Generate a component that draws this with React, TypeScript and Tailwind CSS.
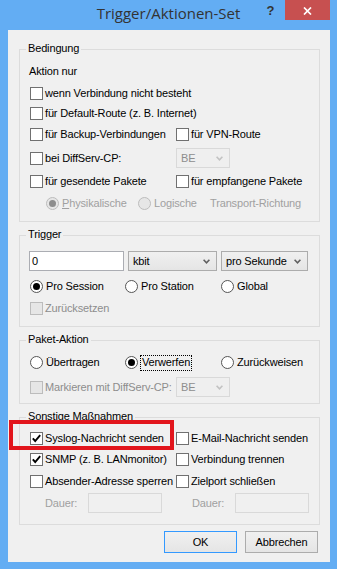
import type { ReactNode } from 'react'

function classNames(...classes: (string | boolean | undefined)[]): string {
  return classes.filter(Boolean).join(' ')
}

// checkbox square, 13px like the classic Win8 control
function Box({ checked, disabled }: { checked?: boolean; disabled?: boolean }) {
  return (
    <span
      className={classNames(
        'flex size-[13px] shrink-0 items-center justify-center border',
        disabled ? 'border-[#bcbcbc] bg-[#e6e6e6]' : 'border-[#707070] bg-white',
      )}
    >
      {checked && (
        <svg width="11" height="11" viewBox="0 0 11 11">
          <path d="M1.8 5.4 L4.2 8 L9.2 2.2" fill="none" stroke="#000" strokeWidth="1.9" />
        </svg>
      )}
    </span>
  )
}

function Check({ label, checked, disabled }: { label: ReactNode; checked?: boolean; disabled?: boolean }) {
  return (
    <div className="flex h-[13px] items-center gap-[2px] whitespace-nowrap">
      <Box checked={checked} disabled={disabled} />
      <span className={disabled ? 'text-[#8d8d8d]' : undefined}>{label}</span>
    </div>
  )
}

function Dot({ checked, disabled }: { checked?: boolean; disabled?: boolean }) {
  return (
    <span
      className={classNames(
        'flex size-[13px] shrink-0 items-center justify-center rounded-full border',
        disabled ? 'border-[#bcbcbc] bg-[#e6e6e6]' : 'border-[#555] bg-white',
      )}
    >
      {checked && <span className={classNames('size-[7px] rounded-full', disabled ? 'bg-[#8d8d8d]' : 'bg-black')} />}
    </span>
  )
}

function Radio({ label, checked, disabled }: { label: ReactNode; checked?: boolean; disabled?: boolean }) {
  return (
    <div className="flex h-[13px] items-center gap-[3px] whitespace-nowrap">
      <Dot checked={checked} disabled={disabled} />
      <span className={disabled ? 'text-[#a0a0a0]' : undefined}>{label}</span>
    </div>
  )
}

function Combo({ value, disabled, className }: { value: string; disabled?: boolean; className?: string }) {
  return (
    <div
      className={classNames(
        'flex h-[20px] shrink-0 items-center justify-between border pl-[4px] pr-[6px]',
        disabled
          ? 'border-[#d9d9d9] bg-[#efefef] text-[#8d8d8d]'
          : 'border-[#acacac] bg-linear-to-b from-[#f0f0f0] to-[#e5e5e5]',
        className,
      )}
    >
      <span className="whitespace-nowrap">{value}</span>
      <svg width="7" height="5" viewBox="0 0 7 5">
        <path d="M0.6 0.8 L3.5 3.8 L6.4 0.8" fill="none" stroke={disabled ? '#c2c2c2' : '#606060'} strokeWidth="1.6" />
      </svg>
    </div>
  )
}

function Group({ title, className, children }: { title: string; className?: string; children: ReactNode }) {
  return (
    <div className={classNames('relative mx-[11px] w-[301px] shrink-0 border border-[#dcdcdc]', className)}>
      <span className="absolute left-[6px] top-[-8px] whitespace-nowrap bg-[#f0f0f0] px-[2px] leading-[13px]">
        {title}
      </span>
      {children}
    </div>
  )
}

export default function App() {
  return (
    <div className="h-[569px] w-[337px] overflow-hidden bg-[#63adf3] font-['Liberation_Sans',Arial,sans-serif] text-[11px] leading-[13px] tracking-[-0.15px] text-black">
      {/* title bar */}
      <div className="relative flex h-[30px] justify-center">
        <span className="pt-[3px] font-['Open_Sans',sans-serif] text-[15px] leading-[20px] tracking-normal text-[#333]">
          Trigger/Aktionen-Set
        </span>
        <div className="absolute right-[7px] top-0 flex">
          <div className="flex h-[20px] w-[29px] items-center justify-center text-[13px] font-bold text-[#333]">
            ?
          </div>
          <div className="flex h-[20px] w-[45px] items-center justify-center bg-[#c75050] pt-[2px]">
            <svg width="9" height="8" viewBox="0 0 9 8">
              <path d="M1 0.5 L8 7.5 M8 0.5 L1 7.5" stroke="#fff" strokeWidth="1.7" />
            </svg>
          </div>
        </div>
      </div>

      {/* client area */}
      <div className="mx-[8px] flex h-[532px] w-[322px] flex-col bg-[#f0f0f0]">
        <Group title="Bedingung" className="mt-[19px] h-[173px]">
          <div className="pl-[10px] pt-[15px]">
            <div className="-ml-px h-[13px]">Aktion nur</div>
            <div className="mt-[9px]">
              <Check label="wenn Verbindung nicht besteht" />
            </div>
            <div className="mt-[7px]">
              <Check label="für Default-Route (z. B. Internet)" />
            </div>
            <div className="mt-[8px] flex">
              <div className="w-[146px]">
                <Check label="für Backup-Verbindungen" />
              </div>
              <Check label="für VPN-Route" />
            </div>
            <div className="mt-[7px] flex h-[20px] items-center">
              <div className="w-[146px]">
                <Check label="bei DiffServ-CP:" />
              </div>
              <Combo value="BE" disabled className="w-[54px]" />
            </div>
            <div className="mt-[7px] flex">
              <div className="w-[146px]">
                <Check label="für gesendete Pakete" />
              </div>
              <Check label="für empfangene Pakete" />
            </div>
            <div className="mt-[9px] flex h-[13px] items-center pl-[16px]">
              <div className="w-[92px]">
                <Radio
                  checked
                  disabled
                  label={
                    <>
                      <span className="underline">P</span>hysikalische
                    </>
                  }
                />
              </div>
              <div className="w-[72px]">
                <Radio disabled label="Logische" />
              </div>
              <span className="whitespace-nowrap text-[#a0a0a0]">Transport-Richtung</span>
            </div>
          </div>
        </Group>

        <Group title="Trigger" className="mt-[13px] h-[92px]">
          <div className="pt-[15px]">
            <div className="flex h-[20px] gap-[4px] pl-[9px]">
              <div className="flex h-[20px] w-[95px] shrink-0 items-center border border-[#abadb3] bg-white pl-[2px]">0</div>
              <Combo value="kbit" className="w-[89px]" />
              <Combo value="pro Sekunde" className="w-[87px]" />
            </div>
            <div className="mt-[9px] flex pl-[10px]">
              <div className="w-[95px]">
                <Radio checked label="Pro Session" />
              </div>
              <div className="w-[96px]">
                <Radio label="Pro Station" />
              </div>
              <Radio label="Global" />
            </div>
            <div className="mt-[9px] pl-[10px]">
              <Check disabled label="Zurücksetzen" />
            </div>
          </div>
        </Group>

        <Group title="Paket-Aktion" className="mt-[13px] h-[64px]">
          <div className="pl-[10px] pt-[15px]">
            <div className="flex h-[13px] items-center">
              <div className="w-[95px]">
                <Radio label="Übertragen" />
              </div>
              <div className="flex w-[96px] items-center">
                <Dot checked />
                <span className="ml-[2px] flex h-[16px] items-center border border-dotted border-black px-[1px]">
                  Verwerfen
                </span>
              </div>
              <Radio label="Zurückweisen" />
            </div>
            <div className="mt-[8px] flex h-[20px] items-center">
              <div className="w-[146px]">
                <Check disabled label="Markieren mit DiffServ-CP:" />
              </div>
              <Combo value="BE" disabled className="w-[54px]" />
            </div>
          </div>
        </Group>

        <Group title="Sonstige Maßnahmen" className="mt-[13px] h-[108px]">
          <div className="pl-[10px] pt-[14px]">
            <div className="flex">
              <div className="w-[146px]">
                <Check checked label="Syslog-Nachricht senden" />
              </div>
              <Check label="E-Mail-Nachricht senden" />
            </div>
            <div className="mt-[8px] flex">
              <div className="w-[146px]">
                <Check checked label="SNMP (z. B. LANmonitor)" />
              </div>
              <Check label="Verbindung trennen" />
            </div>
            <div className="mt-[9px] flex">
              <div className="w-[146px]">
                <Check label="Absender-Adresse sperren" />
              </div>
              <Check label="Zielport schließen" />
            </div>
            <div className="mt-[5px] flex h-[20px] items-center text-[#a0a0a0]">
              <div className="flex w-[146px] items-center pl-[15px]">
                <span className="w-[43px]">Dauer:</span>
                <div className="h-[20px] w-[74px] border border-[#d9d9d9] bg-[#f0f0f0]" />
              </div>
              <div className="flex items-center pl-[16px]">
                <span className="w-[43px]">Dauer:</span>
                <div className="h-[20px] w-[74px] border border-[#d9d9d9] bg-[#f0f0f0]" />
              </div>
            </div>
          </div>
          {/* red highlight marking the syslog option */}
          <div className="absolute left-[-11px] top-[2px] h-[30px] w-[165px] border-4 border-[#e2151c]" />
        </Group>

        <div className="mt-[6px] flex justify-end gap-[8px] pr-[12px]">
          <button
            type="button"
            className="flex h-[22px] w-[73px] items-center justify-center border border-[#3399ff] bg-linear-to-b from-[#f0f0f0] to-[#e5e5e5]"
          >
            OK
          </button>
          <button
            type="button"
            className="flex h-[22px] w-[73px] items-center justify-center border border-[#acacac] bg-linear-to-b from-[#f0f0f0] to-[#e5e5e5]"
          >
            Abbrechen
          </button>
        </div>
      </div>
    </div>
  )
}
